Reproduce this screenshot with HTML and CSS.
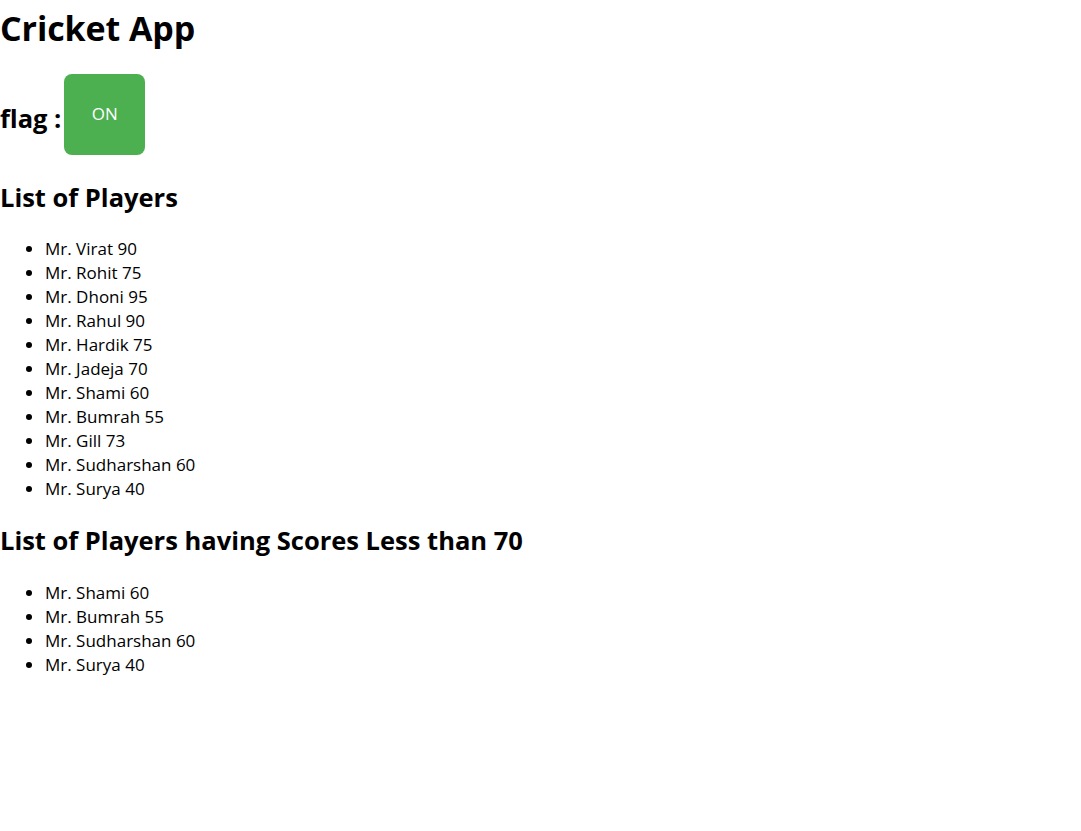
FILE: index.html
```html
<!DOCTYPE html>
<html lang="en">
<head>
<meta charset="utf-8">
<title>Cricket App</title>
<link rel="stylesheet" href="styles.css">
</head>
<body>
<div class="app">
  <h1 class="title">Cricket App</h1>
  <div class="flag-row">
    <h2 class="flag-label">flag :</h2>
    <button class="toggle">ON</button>
  </div>
  <h2 class="section">List of Players</h2>
  <ul class="players">
    <li>Mr. Virat 90</li>
    <li>Mr. Rohit 75</li>
    <li>Mr. Dhoni 95</li>
    <li>Mr. Rahul 90</li>
    <li>Mr. Hardik 75</li>
    <li>Mr. Jadeja 70</li>
    <li>Mr. Shami 60</li>
    <li>Mr. Bumrah 55</li>
    <li>Mr. Gill 73</li>
    <li>Mr. Sudharshan 60</li>
    <li>Mr. Surya 40</li>
  </ul>
  <h2 class="section section-next">List of Players having Scores Less than 70</h2>
  <ul class="players">
    <li>Mr. Shami 60</li>
    <li>Mr. Bumrah 55</li>
    <li>Mr. Sudharshan 60</li>
    <li>Mr. Surya 40</li>
  </ul>
</div>
</body>
</html>
```
FILE: styles.css
```css
html, body {
  margin: 0;
  padding: 0;
  background: #ffffff;
}
body {
  font-family: "Open Sans", "Noto Sans", "DejaVu Sans", sans-serif;
  color: #000000;
}
.app {
  display: flex;
  flex-direction: column;
  align-items: flex-start;
}
.title {
  margin: 0;
  font-size: 34px;
  font-weight: 700;
  line-height: 56px;
  letter-spacing: -0.1px;
}
.flag-row {
  display: flex;
  align-items: center;
  gap: 3px;
  margin-top: 18px;
}
.flag-label {
  margin: 0;
  font-size: 25.5px;
  font-weight: 700;
  line-height: 32px;
  padding-top: 6px;
}
.toggle {
  width: 81px;
  height: 81px;
  border: none;
  border-radius: 8px;
  background: #4caf50;
  color: #ffffff;
  font-family: inherit;
  font-size: 17px;
  padding: 0 0 2px;
}
.section {
  margin: 26px 0 0;
  font-size: 25.5px;
  font-weight: 700;
  line-height: 32px;
}
.section-next {
  margin-top: 23px;
  padding-bottom: 1px;
}
.players {
  margin: 24px 0 0;
  padding-left: 45px;
  font-size: 17px;
  line-height: 24px;
}
```
